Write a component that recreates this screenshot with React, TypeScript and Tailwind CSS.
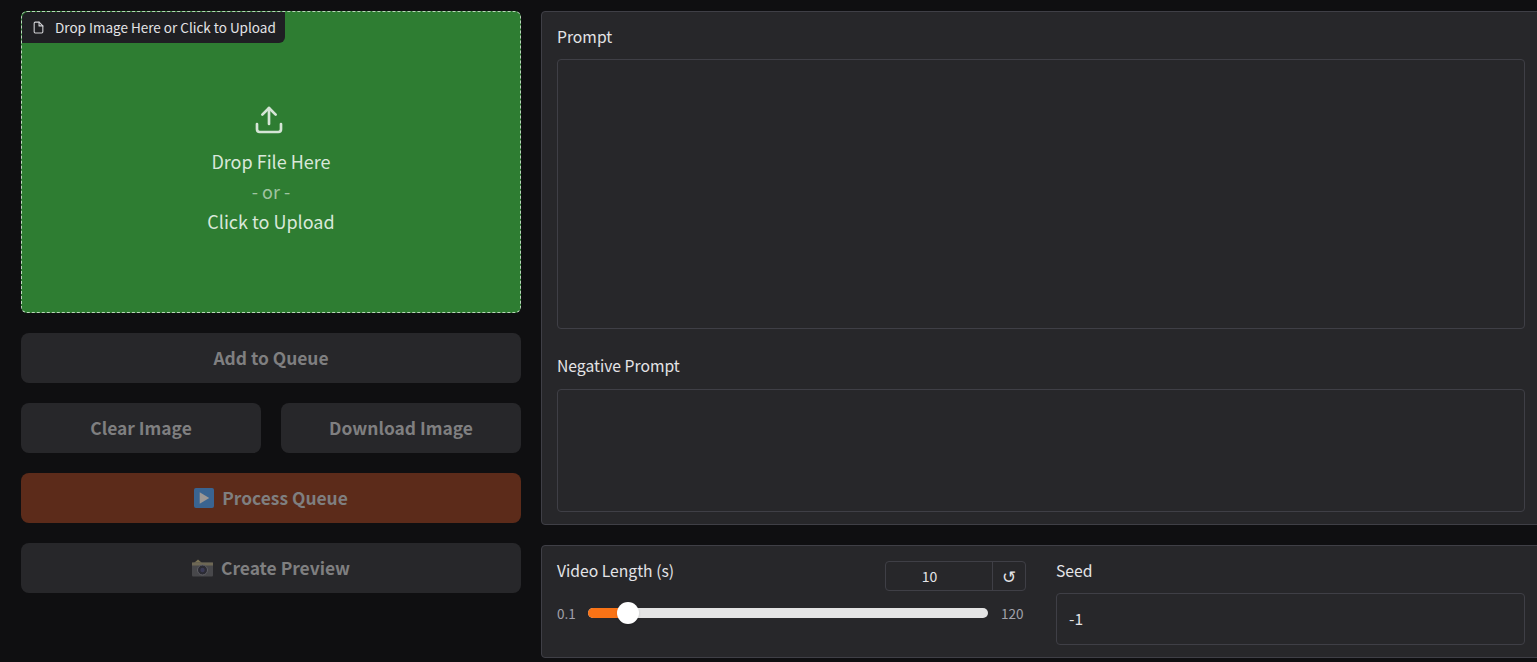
const font = "font-['Noto_Sans_CJK_SC','Noto_Sans',sans-serif]";

function ActionButton({ className = "bg-[#27272a]", children }: { className?: string; children: React.ReactNode }) {
  return (
    <button className={`flex h-[50px] w-full items-center justify-center gap-[8px] rounded-lg text-[17.4px] font-semibold text-[#7f7f80] ${className}`}>
      {children}
    </button>
  );
}

function PlayEmoji() {
  return (
    <svg width="20" height="20" viewBox="0 0 21 21">
      <rect width="21" height="21" rx="2" fill="#3a6491" />
      <path d="M6 4.5 L16 10.5 L6 16.5 Z" fill="#9c9794" />
    </svg>
  );
}

function CameraEmoji() {
  return (
    <svg width="21" height="18" viewBox="0 0 21 18">
      <path d="M2 4 L6 0.5 L10 4 Z" fill="#7b7355" />
      <rect x="0" y="3.5" width="21" height="14" rx="1" fill="#48484b" />
      <rect x="0" y="3.5" width="21" height="3" fill="#6e6855" />
      <circle cx="10.5" cy="11" r="5" fill="#2c2c34" stroke="#606065" />
      <circle cx="10.5" cy="11" r="2.2" fill="#3a3a55" />
    </svg>
  );
}

export default function App() {
  return (
    <div className={`flex h-[662px] w-[1537px] gap-5 overflow-hidden bg-[#0f0f11] pt-[11px] pl-[21px] ${font}`}>
      <div className="flex w-[500px] shrink-0 flex-col gap-5">
        <div className="relative flex h-[302px] flex-col items-center rounded-md border border-dashed border-[#b9d6ba] bg-[#2e7d32] pt-[92px]">
          <div className="absolute top-0 left-0 flex h-[31px] w-[263px] items-center gap-[10px] rounded-br-md rounded-tl-md bg-[#1f1f23] pl-[10px] text-[13.5px] whitespace-nowrap text-[#e4e4e7]">
            <svg width="13" height="13" viewBox="0 0 24 24" fill="none" stroke="#d4d4d8" strokeWidth="2" strokeLinecap="round" strokeLinejoin="round">
              <path d="M13 2H6a2 2 0 0 0-2 2v16a2 2 0 0 0 2 2h12a2 2 0 0 0 2-2V9z" />
              <path d="M13 2v7h7" />
            </svg>
            <span>Drop Image Here or Click to Upload</span>
          </div>
          <svg className="-ml-[4px]" width="32" height="32" viewBox="0 0 24 24" fill="none" stroke="#d5e5d6" strokeWidth="2" strokeLinecap="round" strokeLinejoin="round">
            <path d="M21 15v4a2 2 0 0 1-2 2H5a2 2 0 0 1-2-2v-4" />
            <path d="M17 8l-5-5-5 5" />
            <path d="M12 3v12" />
          </svg>
          <div className="mt-[10px] flex flex-col items-center text-[18px] leading-[30px] text-[#d9e8da]">
            <span>Drop File Here</span>
            <span className="text-[#a0c4a2]">- or -</span>
            <span>Click to Upload</span>
          </div>
        </div>
        <ActionButton>Add to Queue</ActionButton>
        <div className="flex gap-5">
          <ActionButton>Clear Image</ActionButton>
          <ActionButton>Download Image</ActionButton>
        </div>
        <ActionButton className="bg-[#5c2b1a]">
          <PlayEmoji />
          Process Queue
        </ActionButton>
        <ActionButton>
          <CameraEmoji />
          Create Preview
        </ActionButton>
      </div>

      <div className="flex w-[1000px] shrink-0 flex-col gap-5">
        <div className="flex h-[514px] flex-col rounded border border-[#3f3f46] bg-[#27272a] px-[15px] pt-[12px] text-[#e4e4e7]">
          <label className="text-[15.7px] leading-[25px]">Prompt</label>
          <div className="mt-[10px] h-[270px] rounded border border-[#3f3f46]" />
          <label className="mt-[24px] text-[15.7px] leading-[25px]">Negative Prompt</label>
          <div className="mt-[11px] h-[123px] rounded border border-[#3f3f46]" />
        </div>

        <div className="flex h-[113px] gap-[30px] rounded border border-[#3f3f46] bg-[#27272a] px-[15px] pt-[15px] text-[#e4e4e7]">
          <div className="w-[469px]">
            <div className="flex items-start justify-between">
              <label className="mt-[-3px] text-[15.7px] leading-[25px]">Video Length (s)</label>
              <div className="flex h-[30px] w-[141px] rounded border border-[#3f3f46] text-[14px]">
                <div className="flex w-[107px] items-center justify-center border-r border-[#3f3f46] pr-[19px]">10</div>
                <div className="flex flex-1 items-center justify-center text-[17px]">↺</div>
              </div>
            </div>
            <div className="mt-[12px] flex items-center text-[13.5px] text-[#a1a1aa]">
              <span className="w-[31px]">0.1</span>
              <div className="relative h-[10px] w-[400px] rounded-full bg-[#e4e4e4]">
                <div className="h-full w-[40px] rounded-l-full bg-[#f97316]" />
                <div className="absolute top-[-6px] left-[29px] h-[22px] w-[22px] rounded-full bg-white shadow" />
              </div>
              <span className="ml-[13px]">120</span>
            </div>
          </div>
          <div className="w-[469px]">
            <label className="mt-[-3px] block text-[15.7px] leading-[25px]">Seed</label>
            <div className="mt-[10px] flex h-[52px] items-center rounded border border-[#3f3f46] pl-3 text-[15.5px]">-1</div>
          </div>
        </div>
      </div>
    </div>
  );
}
